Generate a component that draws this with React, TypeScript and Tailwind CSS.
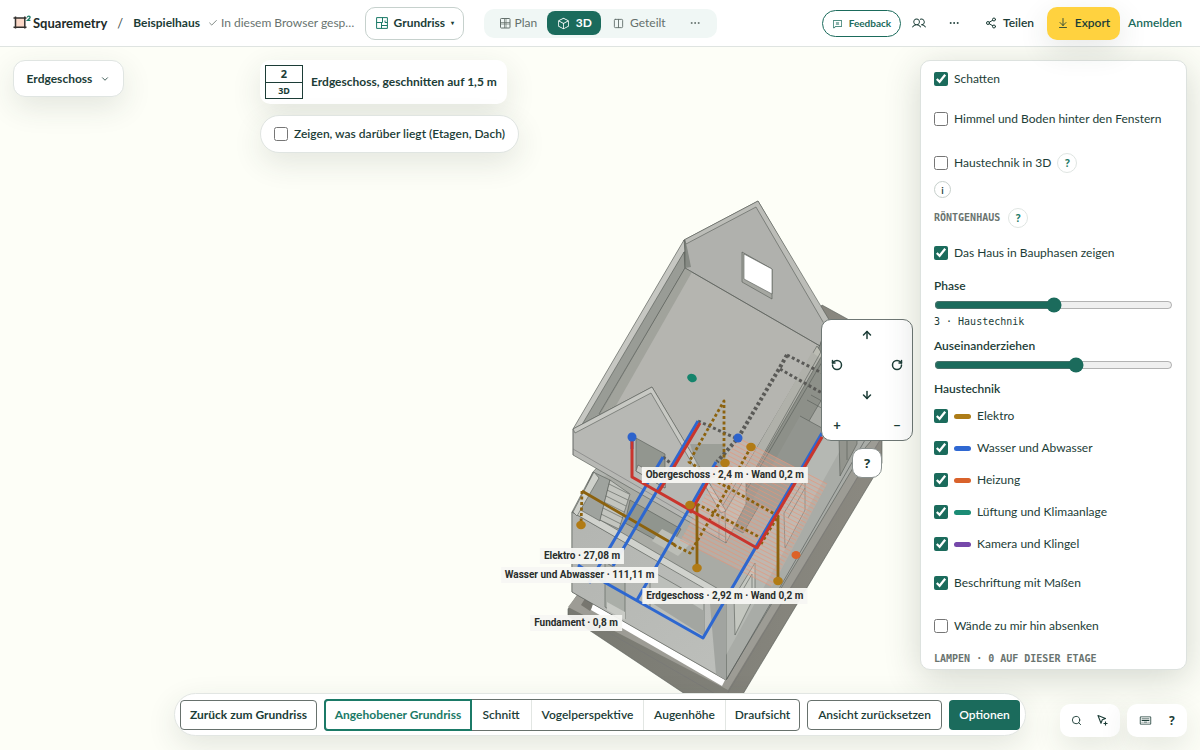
import type { ReactNode } from "react";
import { ArrowDown, ArrowDownToLine, ArrowUp, Check, ChevronDown, Columns2, Ellipsis, RotateCcw, RotateCw, Search, Share2 } from "lucide-react";
import { PiChatText, PiCube, PiKeyboard, PiUsers } from "react-icons/pi";

function Logo() {
  return (
    <svg className="h-4 w-5 shrink-0" viewBox="0 0 20 16" aria-hidden="true">
      <rect x="3" y="3" width="8.500" height="9" fill="#fbd8c8" />
      <path d="M2.500 1.500v12M11.800 1.500v12M.5 3h13M.5 12.300h13" stroke="#33302e" strokeWidth="1.500" fill="none" />
      <path d="M14.300 2.300c.3-1.700 3-1.500 2.800.1-.1 1-1.300 1.600-2.700 3h3" stroke="#1b7a67" strokeWidth="1.300" fill="none" />
    </svg>
  );
}

function FloorPlanIcon() {
  return (
    <svg className="size-3 text-[#1b7a67]" viewBox="0 0 12 12" fill="none" stroke="currentColor" aria-hidden="true">
      <path d="M.6.6h10.800v10.800H.6zM6.500.6v4.900M.6 5.500h5.900M9 5.500h2.400M9 3.500v2M5.500 5.500v5.900M5.500 8.500h5.900" />
    </svg>
  );
}

function PlanIcon() {
  return (
    <svg className="size-3" viewBox="0 0 12 12" fill="none" stroke="currentColor" aria-hidden="true">
      <rect x="1.500" y="1.500" width="9.500" height="9.500" rx=".8" />
      <path d="M5.500 1.500v9.500M7 1.500v9.500M1.500 5.500h9.500M1.500 7h9.500" strokeWidth=".7" />
    </svg>
  );
}

function PointerPlusIcon() {
  return (
    <svg className="size-[13px]" viewBox="0 0 13 13" fill="none" stroke="currentColor" strokeWidth="1.100" strokeLinejoin="round" aria-hidden="true">
      <path d="M2 1.500l7.500 3-3.200 1.300-1.300 3.400zM9.500 7.500v4M7.500 9.500h4" />
    </svg>
  );
}

const shadow = "shadow-[0_10px_30px_rgba(40,60,50,0.12)]";

function HelpDot({ children, label }: { children: ReactNode; label: string }) {
  return (
    <button aria-label={label} className="flex size-5 items-center justify-center rounded-full border border-[#dfe5e2] bg-white font-['Noto_Sans',sans-serif] text-[10px] font-bold text-[#1b7a67]">
      {children}
    </button>
  );
}

function Option({ label, checked = false, color, className }: { label: string; checked?: boolean; color?: string; className?: string }) {
  return (
    <label className={`flex items-center ${className ?? ""}`}>
      <input type="checkbox" defaultChecked={checked} className="size-[14px] shrink-0 accent-[#1b6b5c]" />
      {color && <span className={`ml-[6px] h-[5px] w-[17px] rounded-full ${color}`} />}
      <span className="ml-[6px]">{label}</span>
    </label>
  );
}

function Header() {
  return (
    <header className="z-10 flex h-[47px] shrink-0 items-center border-b border-[#dfe4e1] bg-white px-[13px]">
      <a href="#start" className="flex items-center text-[13px] font-bold text-[#222b29]">
        <Logo />
        Squaremetry
      </a>
      <span className="ml-[10px] text-[13px] text-[#444f4c]">/</span>
      <a href="#projekt" className="ml-[10px] font-bold">Beispielhaus</a>
      <span className="ml-2 flex items-center gap-[3px] whitespace-nowrap text-[#69736f]">
        <Check className="size-[10px] shrink-0" />
        In diesem Browser gesp…
      </span>
      <button className="ml-[11px] flex h-[33px] w-[99px] shrink-0 items-center justify-center gap-[6px] rounded-[10px] border border-[#c6d1cd] font-bold">
        <FloorPlanIcon />
        Grundriss
        <span className="text-[6px]">▾</span>
      </button>
      <nav className="ml-5 flex h-[29px] w-[233px] shrink-0 items-center rounded-[10px] bg-[#f0f7f5] px-1 text-[#64706c]">
        <button className="flex w-[59px] items-center justify-center gap-1"><PlanIcon />Plan</button>
        <button className="flex h-6 w-[54px] items-center justify-center gap-[6px] rounded-lg bg-[#1b6b5c] font-bold text-white"><PiCube className="size-[13px]" />3D</button>
        <button className="flex w-[76px] items-center justify-center gap-[6px]"><Columns2 className="size-[11px]" />Geteilt</button>
        <button aria-label="Weitere Ansichten" className="flex flex-1 justify-center"><Ellipsis className="size-3" /></button>
      </nav>
      <div className="ml-auto flex shrink-0 items-center">
        <button className="flex h-[27px] w-[79px] items-center justify-center gap-[6px] rounded-full border border-[#1b6b5c] text-[10px] font-bold text-[#1b6b5c]"><PiChatText className="size-[11px]" />Feedback</button>
        <button aria-label="Personen" className="ml-[11px]"><PiUsers className="size-[14px]" /></button>
        <button aria-label="Mehr" className="ml-[22px]"><Ellipsis className="size-3" /></button>
        <button className="ml-[25px] flex items-center gap-[6px] font-semibold"><Share2 className="size-3" />Teilen</button>
        <button className={`ml-[13px] flex h-[33px] w-[73px] items-center justify-center gap-[6px] rounded-[10px] bg-[#ffd23f] font-semibold ${shadow}`}><ArrowDownToLine className="size-3" strokeWidth={1.7} />Export</button>
        <a href="#anmelden" className="ml-2 w-[59px] font-semibold text-[#1b6b5c]">Anmelden</a>
      </div>
    </header>
  );
}

const hatch = Array.from({ length: 30 }, (_, i) => {
  const t = i / 29;
  return { x1: 738 - 58 * t, y1: 438 + 102 * t, x2: 827 - 56 * t, y2: 484 + 102 * t };
});

function House() {
  return (
    <svg className="absolute inset-0 h-full w-full" viewBox="0 47 1200 703" preserveAspectRatio="xMidYMid slice" role="img" aria-label="Aufgeschnittenes Haus mit Leitungen">
      <defs>
        <linearGradient id="front" x1="0" x2="1" y2="1"><stop stopColor="#b3b5b1" /><stop offset="1" stopColor="#bdbfbb" /></linearGradient>
        <linearGradient id="base" x1="0" x2="1"><stop stopColor="#787971" /><stop offset="1" stopColor="#8b8981" /></linearGradient>
      </defs>
      <g stroke="#555a56" strokeWidth=".6" strokeLinejoin="round">
        <path d="M822 305L882 338V463L743 694 735 702 685 694 568 616V609L578 594Z" fill="url(#base)" />
        <path d="M578 594l146 84 158-260v18L728 690 568 607Z" fill="#9d9c95" stroke="none" />
        <path d="M568 609l156 90 158-262" fill="none" stroke="#777" />
        <path d="M586 597l8 7-4 7-9-6Z" fill="#77766f" stroke="none" />
        <path d="M593 604l132 76-3 6-131-76Z" fill="#fff" stroke="none" />
        <path d="M572 512l21-40 153-170 119 70v65L726 678 572 592Z" fill="#b0b3ae" />
        <path d="M578 513l20-34 240-100 16 10-128 206Z" fill="#a9aba5" stroke="none" />
        <path d="M726 600L858 378l24 50-17 20-139 232Z" fill="#a9aca7" />
        <path d="M726 600L868 365l3 30-145 260Z" fill="#b5b8b3" stroke="none" />
        <path d="M865 440L727 679" fill="none" stroke="#4f5452" />
        <path d="M572 512l154 88v80l-154-88Z" fill="url(#front)" />
        <path d="M572 512l6-5 154 90-6 4Z" fill="#d0d2cd" />
        <path d="M709 592l17 8v80l-10-6Z" fill="#a1a4a0" stroke="none" />
        <path d="M593 472l17 8-10 41-23-13Z" fill="#9fa39e" />
        <path d="M594 472l-21 40 4 4 22-38Z" fill="#cfd1cb" />
        <path d="M610 480l-10 40 19 9 11-35Z" fill="#c3c5bf" />
        <path d="M609 484l20 10M607 490l21 10M606 496l20 10M604 502l20 10M603 508l20 10M601 514l20 10" />
        <path d="M630 500l51 29-11 19-45-25Z" fill="#90958e" />
        <path d="M662 529l28 15-12 12-26-15Z" fill="#bcbeb7" stroke="none" />
        <path d="M605 562l20 12v45l-20-12Z" fill="#aaaea8" />
        <path d="M607 602l18 10v8l-18-10Z" fill="#c8cac5" stroke="none" />
        <path d="M650 570l54 31v37l-54-30Z" fill="#bcbfba" />
        <path d="M652 603l25-9 27 17v25Z" fill="#a3a6a1" stroke="none" />
        <path d="M734 597l21-34v32l-20 40Z" fill="#c4c7c0" />
        <path d="M738 598l14-24v16" fill="none" />
        <path d="M784 513l21-34v31l-20 38Z" fill="#b8bbb5" /><path d="M788 518l17-30" />
        <path d="M839 438l18-30v36l-17 32Z" fill="#93958e" /><path d="M847 424v36" />
        <path d="M684 240l74-39 83 142-74 121-41 76-153-85v-26Z" fill="#b5b5b0" stroke="none" />
        <path d="M758 201l-74 39 1 28 135 78 8-26Z" fill="#b0b1ad" />
        <path d="M820 345L725 510v32l115-199-12-23Z" fill="#858983" />
        <path d="M817 346L719 512l7 28 101-179Z" fill="#bcbdb4" />
        <path d="M812 352l-92 160 4 10 97-163Z" fill="#b0b1aa" stroke="none" />
        <path d="M822 350l-82 146M800 417l-49 84" fill="none" />
        <path d="M828 345l-103 178 18 10 99-168Z" fill="#8d9089" />
        <path d="M822 362l-86 146" fill="none" />
        <path d="M800 416l24 13-50 84-22-12Z" fill="#92958f" stroke="none" />
        <path d="M800 416l22 12M807 400l20 11M811 395l18 10" fill="none" />
        <path d="M758 201l-74 39 2 4 70-37 70 120 5-4Z" fill="#bcbdb8" />
        <path d="M684 240l-111 189 10-1 102-177Z" fill="#c6c7c2" />
        <path d="M684 252L580 428l20-13 85-147Z" fill="#999c96" />
        <path d="M685 268l-85 146 14-5 78-137Z" fill="#a1a39c" stroke="none" />
        <path d="M614 409l38-22 22 36-4 6-19-34-50 25Z" fill="#bdbbb1" stroke="none" />
        <path d="M685 240v28l6-1-4-20Z" fill="#868a84" stroke="none" />
        <path d="M685 240v28l135 78M685 268l-86 146" fill="none" />
        <path d="M742 252l30 17v30l-30-17Z" fill="#a5a7a1" />
        <path d="M744 254l28 15v25l-28-15Z" fill="#fff" />
        <path d="M652 387l-79 42v26l153 88v-31Z" fill="#b7b8b4" />
        <path d="M652 387l-79 42 2 4 76-40 70 120 5-2Z" fill="#c8c9c4" />
        <path d="M573 449l152 88M573 429v26M719 511v28" fill="none" stroke="#777" />
        <path d="M636 438l29 16v34l-29-17Z" fill="#92968f" />
        <path d="M638 465l27 15v8l-29-17Z" fill="#c7c9c4" />
        <path d="M690 444h35v31l-24 4Z" fill="#92958e" stroke="none" opacity=".7" />
        <path d="M725 512l21-36v28l-20 39Z" fill="#bdbdb6" />
      </g>
      <path d="M738 437l89 47-55 103-91-47Z" fill="#d9b5a5" opacity=".3" />
      {hatch.map((l) => <line key={l.x1} {...l} stroke="#ee9274" strokeWidth="1" opacity=".6" />)}
      <g fill="none" strokeLinejoin="round" strokeWidth="3">
        <g stroke="#5a5a57" strokeDasharray="3 2.500">
          <path d="M663 457l11 9M698 421l40 18M787 355l35 18M780 369l42 24" /><path d="M787 355l-8 14-41 69-21 24" strokeWidth="4" />
        </g>
        <g stroke="#8c620e" strokeDasharray="3 2.500" strokeWidth="2.800">
          <path d="M582 491l-1 34M724 463v-62l-35 61 30 18M751 447l-36 64-25 42-16-8M697 504l64 34M718 482l60 34-17 28" />
        </g>
        <path d="M582 491l93 54M697 504v64M778 516v65" stroke="#8c620e" strokeWidth="2.800" />
        <g stroke="#2d67d0">
          <path d="M632 437v12M663 457l-74 126M698 421l-85 145M716 462l-79 138M578 565l26 17 99 56 119-205" />
        </g>
        <path d="M632 439v38l125 71 65-111M700 423l-32 54M668 477l-10 16M717 466l-27 47" stroke="#c9352d" />
      </g>
      <g fill="#2d63cc"><circle cx="632" cy="437" r="4.500" /><circle cx="738" cy="438" r="4.500" /></g>
      <g fill="#b17b15">
        {[[751, 447], [725, 463], [690, 505], [581, 525], [697, 568], [778, 581]].map(([x, y]) => <ellipse key={`${x}-${y}`} cx={x} cy={y} rx="4.800" ry="4.200" />)}
      </g>
      <ellipse cx="692" cy="378" rx="5" ry="4" fill="#15846c" transform="rotate(25 692 378)" />
      <ellipse cx="796" cy="555" rx="4.500" ry="4" fill="#dc6227" />
    </svg>
  );
}

function Tag({ place, children }: { place: string; children: ReactNode }) {
  return <span className={`absolute flex h-4 -translate-x-1/2 -translate-y-1/2 items-center bg-[#f7f7f3]/95 px-1 font-[Roboto,sans-serif] text-[10px] font-bold whitespace-nowrap text-[#292e2b] ${place}`}>{children}</span>;
}

function Options() {
  return (
    <aside className="absolute top-[13px] right-[13px] bottom-[80px] w-[267px] overflow-hidden rounded-[10px] border border-[#dde2df] bg-white px-[13px] shadow-[0_8px_36px_rgba(40,55,45,0.20)]">
      <Option label="Schatten" checked className="h-9" />
      <Option label="Himmel und Boden hinter den Fenstern" className="h-11" />
      <div className="mt-1 flex h-9 items-center gap-[6px]">
        <Option label="Haustechnik in 3D" />
        <HelpDot label="Hilfe zur Haustechnik">?</HelpDot>
      </div>
      <button aria-label="Information" className="flex size-[17px] items-center justify-center rounded-full border border-[#c6cfcb] text-[10px] font-semibold">i</button>
      <div className="mt-[9px] flex h-[22px] items-center gap-2">
        <h2 className="font-['DejaVu_Sans_Mono',monospace] text-[10px] font-bold text-[#6a746f]">RÖNTGENHAUS</h2>
        <HelpDot label="Hilfe zum Röntgenhaus">?</HelpDot>
      </div>
      <Option label="Das Haus in Bauphasen zeigen" checked className="h-12" />
      <label htmlFor="phase" className="flex h-[18px] items-center font-semibold">Phase</label>
      <div className="flex h-5 items-center"><input id="phase" type="range" min={1} max={5} defaultValue={3} className="w-full accent-[#1b6b5c]" /></div>
      <p className="flex h-[14px] items-center font-['DejaVu_Sans_Mono',monospace] text-[10px]">3 · Haustechnik</p>
      <label htmlFor="abstand" className="mt-2 flex h-[18px] items-center font-semibold">Auseinanderziehen</label>
      <div className="flex h-5 items-center"><input id="abstand" type="range" defaultValue={60} className="w-full accent-[#1b6b5c]" /></div>
      <h3 className="mt-[5px] mb-[2px] flex h-[18px] items-center font-semibold">Haustechnik</h3>
      <Option label="Elektro" checked color="bg-[#ad7c17]" className="h-8" />
      <Option label="Wasser und Abwasser" checked color="bg-[#2f68d2]" className="h-8" />
      <Option label="Heizung" checked color="bg-[#d9622b]" className="h-8" />
      <Option label="Lüftung und Klimaanlage" checked color="bg-[#1c8c75]" className="h-8" />
      <Option label="Kamera und Klingel" checked color="bg-[#7648aa]" className="h-8" />
      <Option label="Beschriftung mit Maßen" checked className="h-[46px]" />
      <Option label="Wände zu mir hin absenken" className="h-10" />
      <h2 className="mt-[6px] flex h-[14px] items-center font-['DejaVu_Sans_Mono',monospace] text-[10px] font-bold whitespace-nowrap text-[#6a746f]">LAMPEN · 0 AUF DIESER ETAGE</h2>
    </aside>
  );
}

function CameraPad() {
  return (
    <div className="pointer-events-none absolute inset-y-0 right-[287px] flex flex-col items-center justify-center gap-[7px]">
      <div className="pointer-events-auto grid grid-cols-[30px_30px_30px] grid-rows-[30px_30px_30px_30px] place-items-center rounded-[10px] border border-[#6e7774] bg-white text-[13px] font-bold">
        <button aria-label="Nach oben" className="col-start-2"><ArrowUp className="size-3" strokeWidth={3} /></button>
        <button aria-label="Nach links drehen" className="col-start-1 row-start-2"><RotateCcw className="size-3" strokeWidth={3} /></button>
        <button aria-label="Nach rechts drehen" className="col-start-3 row-start-2"><RotateCw className="size-3" strokeWidth={3} /></button>
        <button aria-label="Nach unten" className="col-start-2 row-start-3"><ArrowDown className="size-3" strokeWidth={3} /></button>
        <button aria-label="Vergrößern" className="col-start-1 row-start-4">+</button>
        <button aria-label="Verkleinern" className="col-start-3 row-start-4">−</button>
      </div>
      <button aria-label="Hilfe" className="pointer-events-auto size-[30px] rounded-[10px] border border-[#8b9290] bg-white font-['Noto_Sans',sans-serif] text-[13px] font-bold">?</button>
    </div>
  );
}

function Toolbar() {
  return (
    <div className="pointer-events-none absolute inset-x-0 bottom-[14px] flex justify-center">
      <div className={`pointer-events-auto flex h-[43px] items-center gap-[7px] rounded-full border border-[#e2e6e3] bg-white px-[5px] font-semibold whitespace-nowrap ${shadow}`}>
        <button className="h-[30px] w-[137px] rounded border border-[#67716d] font-bold">Zurück zum Grundriss</button>
        <div className="flex h-8 rounded border border-[#67716d]">
          <button className="-m-px w-[148px] rounded-l border-2 border-[#1b7a67] font-bold text-[#1b7a67]">Angehobener Grundriss</button>
          <button className="w-[60px]">Schnitt</button>
          <button className="w-[112px] border-l border-[#e2e6e3]">Vogelperspektive</button>
          <button className="w-[82px] border-l border-[#e2e6e3]">Augenhöhe</button>
          <button className="w-[74px] border-l border-[#e2e6e3]">Draufsicht</button>
        </div>
        <button className="h-[30px] w-[135px] rounded border border-[#67716d]">Ansicht zurücksetzen</button>
        <button className="h-[30px] w-[71px] rounded bg-[#1b6b5c] text-white">Optionen</button>
      </div>
    </div>
  );
}

export default function App() {
  return (
    <div className="flex h-screen flex-col overflow-hidden bg-[#fdfef7] font-[Lato,sans-serif] text-[12px] leading-4 text-[#1c3d37]">
      <Header />
      <main className="relative min-h-0 flex-1">
        <House />
        <Tag place="left-[60.4%] top-[60.9%]">Obergeschoss · 2,4 m · Wand 0,2 m</Tag>
        <Tag place="left-[48.5%] top-[72.4%]">Elektro · 27,08 m</Tag>
        <Tag place="left-[48.3%] top-[75.1%]">Wasser und Abwasser · 111,11 m</Tag>
        <Tag place="left-[60.4%] top-[78.1%]">Erdgeschoss · 2,92 m · Wand 0,2 m</Tag>
        <Tag place="left-[48%] top-[82%]">Fundament · 0,8 m</Tag>

        <button className={`absolute top-[13px] left-[13px] flex h-[37px] w-[111px] items-center justify-center gap-2 rounded-[12px] border border-[#e0e5e2] bg-white font-bold ${shadow}`}>
          Erdgeschoss
          <ChevronDown className="size-[10px]" />
        </button>

        <div className="absolute top-[13px] left-[260px] flex flex-col items-start gap-[11px] font-bold">
          <div className={`flex h-11 items-center gap-2 rounded-[10px] bg-white pr-[10px] pl-[5px] ${shadow}`}>
            <div className="flex w-[38px] flex-col border border-[#1c3d37] text-center font-['Noto_Sans',sans-serif]">
              <span className="h-[17px] border-b border-[#1c3d37] text-[11px]">2</span>
              <span className="h-[15px] text-[9px]">3D</span>
            </div>
            Erdgeschoss, geschnitten auf 1,5 m
          </div>
          <label className={`flex h-[38px] items-center gap-[6px] rounded-full border border-[#e0e5e2] bg-white px-[13px] ${shadow}`}>
            <input type="checkbox" className="size-[14px] accent-[#1b6b5c]" />
            <span className="font-semibold">Zeigen, was darüber liegt (Etagen, Dach)</span>
          </label>
        </div>

        <CameraPad />
        <Options />
        <Toolbar />

        <div className="absolute right-[13px] bottom-[13px] flex gap-[7px]">
          <div className={`flex h-[33px] w-[60px] items-center justify-around rounded-[10px] bg-white px-1 ${shadow}`}>
            <button aria-label="Suchen"><Search className="size-[11px]" /></button>
            <button aria-label="Auswählen"><PointerPlusIcon /></button>
          </div>
          <div className={`flex h-[33px] w-[60px] items-center justify-around rounded-[10px] bg-white px-1 ${shadow}`}>
            <button aria-label="Tastatur"><PiKeyboard className="size-[13px]" /></button>
            <button aria-label="Hilfe" className="font-['Noto_Sans',sans-serif] text-[12px] font-bold">?</button>
          </div>
        </div>
      </main>
    </div>
  );
}
